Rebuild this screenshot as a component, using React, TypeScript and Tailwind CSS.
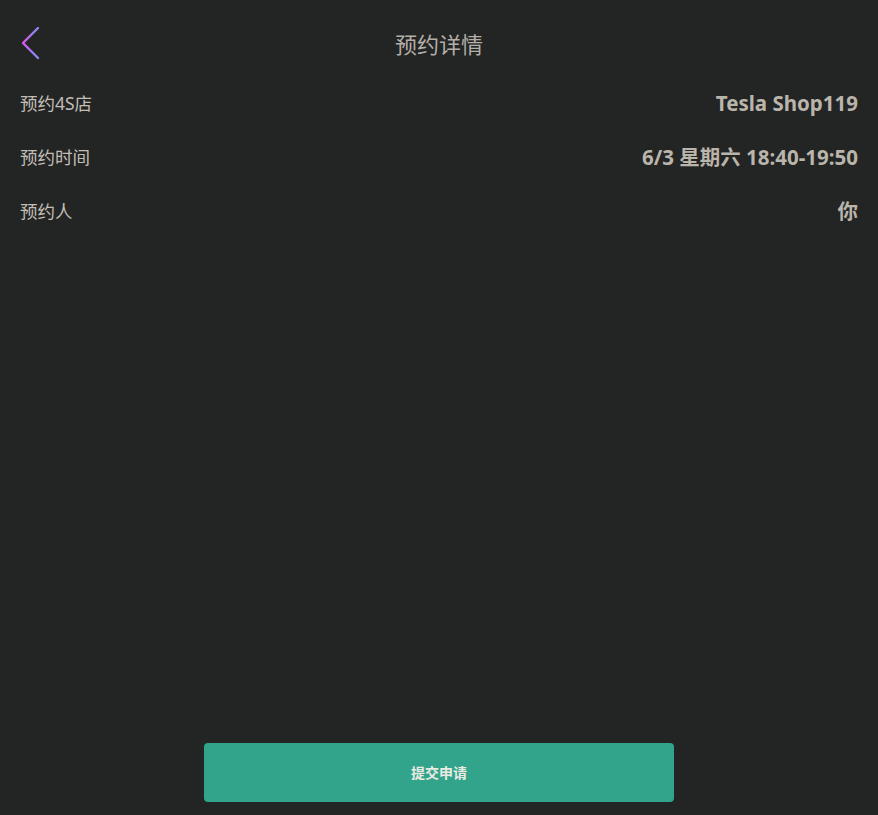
import React from "react";

const rows = [
  { label: "预约4S店", value: "Tesla Shop119" },
  { label: "预约时间", value: "6/3 星期六 18:40-19:50" },
  { label: "预约人", value: "你" },
];

function BackIcon() {
  return (
    <svg width="24" height="34" viewBox="0 0 24 34" fill="none">
      <defs>
        <linearGradient id="back" x1="0" y1="0" x2="1" y2="0">
          <stop offset="0" stopColor="#d957e6" />
          <stop offset="1" stopColor="#7f8ef2" />
        </linearGradient>
      </defs>
      <path
        d="M20 2 L5 17 L20 32"
        stroke="url(#back)"
        strokeWidth="2.4"
        strokeLinecap="round"
        strokeLinejoin="round"
      />
    </svg>
  );
}

export default function App() {
  return (
    <div
      className="flex h-screen flex-col bg-[#232424] text-[#bdb9b1]"
      style={{ fontFamily: '"Noto Sans", "Noto Sans CJK SC", sans-serif' }}
    >
      <div className="relative flex h-[76px] items-center justify-center pt-3">
        <button className="absolute left-[18px] top-[26px]">
          <BackIcon />
        </button>
        <div className="text-[22px] text-[#b3afa8]">预约详情</div>
      </div>

      <div className="px-5">
        {rows.map((r) => (
          <div key={r.label} className="flex h-[54px] items-center justify-between">
            <span className="text-[17.5px] text-[#c2beb6]">{r.label}</span>
            <span className="text-[20.5px] font-bold text-[#bab5ab]">{r.value}</span>
          </div>
        ))}
      </div>

      <div className="mt-auto mb-[13px] flex justify-center">
        <button className="h-[59px] w-[470px] rounded-[4px] bg-[#31a48b] text-[14px] font-bold text-[#ecebe3]">
          提交申请
        </button>
      </div>
    </div>
  );
}
